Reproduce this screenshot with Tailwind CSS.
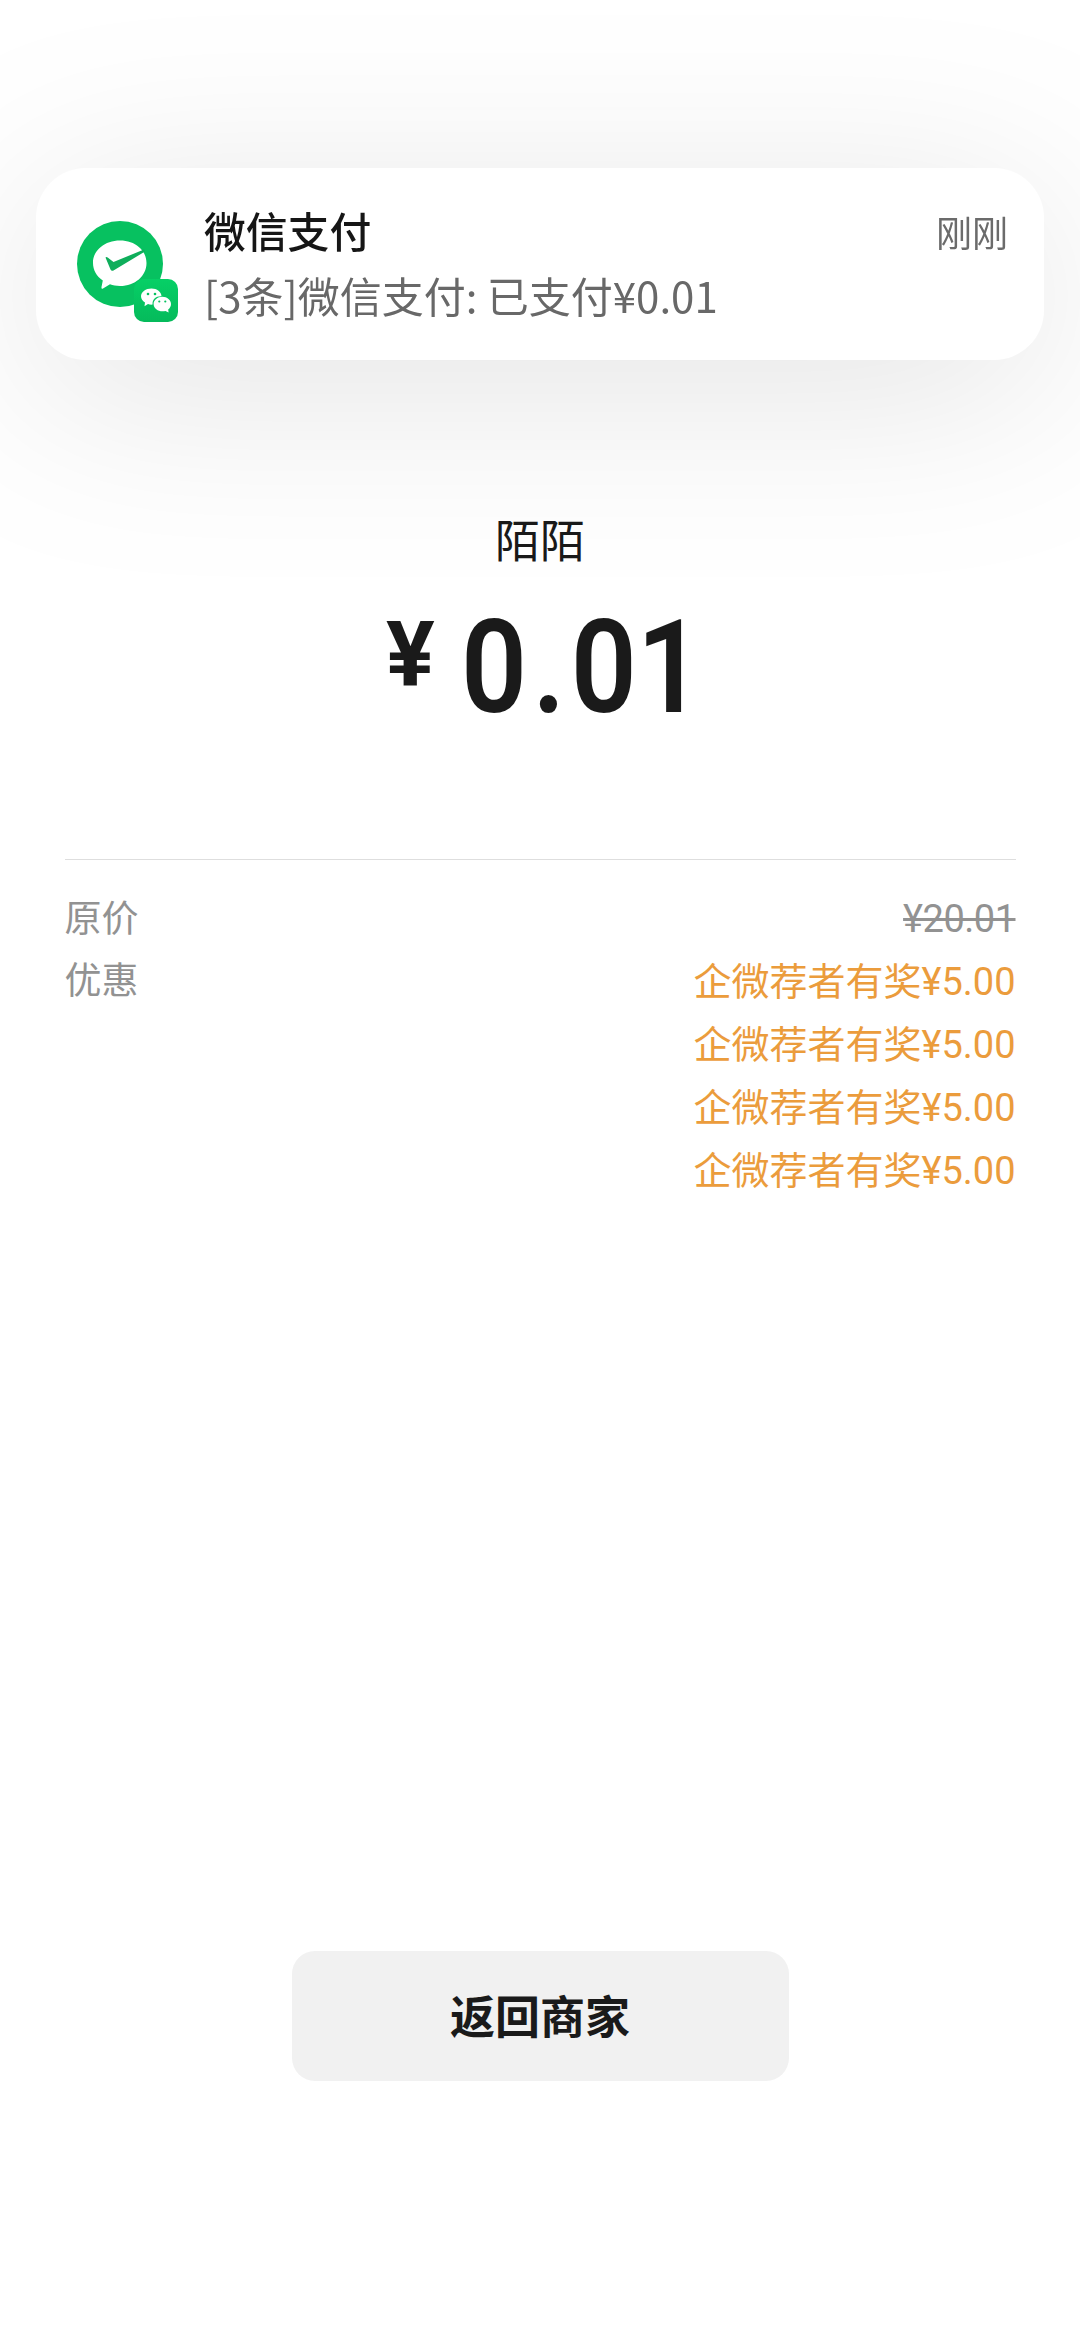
<!DOCTYPE html>
<html lang="zh-CN">
<head>
  <meta charset="UTF-8" />
  <meta name="viewport" content="width=device-width, initial-scale=1.0" />
  <title>微信支付</title>
  <script src="https://cdn.jsdelivr.net/npm/@tailwindcss/browser@4"></script>
</head>
<body class="bg-white text-[#1a1a1a] font-['Roboto','Noto_Sans_CJK_SC',sans-serif]">
  <div class="w-[1080px] h-[2340px] flex flex-col items-center overflow-hidden pt-[168px]">
    <!-- Notification -->
    <div class="w-[1008px] h-48 shrink-0 flex rounded-[50px] bg-white drop-shadow-[0_32px_96px_rgba(0,0,0,0.11)] pl-[41px] pr-9 pt-[35px]">
      <svg class="w-[102px] h-[102px] shrink-0 mt-[18px]" viewBox="0 0 102 102">
        <defs>
          <linearGradient id="badge" x1="0" y1="0" x2="0" y2="1">
            <stop offset="0" stop-color="#06d066" />
            <stop offset="1" stop-color="#05ba5b" />
          </linearGradient>
        </defs>
        <circle cx="43" cy="43" r="43" fill="#07c160" />
        <path d="M43 19.500C58 19.500 69.500 29 69.500 42S58 65 43 65C39 65 36 64.400 33 63.300L26 67.500Q24 68.500 24.500 66L25.800 59.500C19.500 55.300 16 49 16 42C16 29 28 19.500 43 19.500Z" fill="#fff" />
        <path d="M28.500 36.500Q29.500 35.500 31 36.800L36.500 41L67 28.500L68 30.500L36.500 49.500Q34.500 50.500 33.500 48.500Z" fill="#0fae5b" />
        <rect x="57" y="58" width="44" height="43" rx="10" fill="url(#badge)" />
        <path d="M74.500 67.500C80 67.500 84.500 71 84.500 75.300C79 75 75 78.500 75.600 83.600C74 83.800 72.300 83.500 71 83L67.500 85.200L68 81.600C65.500 80 64 77.800 64 75.300C64 71 68.800 67.500 74.500 67.500Z" fill="#fff" />
        <path d="M85.300 75.700C90.200 75.700 94 79 94 83C94 85.300 92.900 87.200 91.200 88.500L91.600 91.500L88.500 89.900C83 91.600 76.600 88.300 76.600 83C76.600 79 80.500 75.700 85.300 75.700Z" fill="#fff" />
        <g fill="#07c160">
          <circle cx="71" cy="73" r="1.300" />
          <circle cx="78" cy="73" r="1.300" />
          <circle cx="82.300" cy="80.500" r="1.100" />
          <circle cx="88.300" cy="80.500" r="1.100" />
        </g>
      </svg>
      <div class="flex-1 ml-[25px]">
        <div class="flex justify-between">
          <h1 class="text-[41.800px] leading-[62px] font-medium text-[#161616]">微信支付</h1>
          <span class="text-[36px] leading-[64px] text-[#6b6b6b]">刚刚</span>
        </div>
        <p class="text-[42px] leading-[56px] text-[#686868] font-['Noto_Sans_CJK_SC',sans-serif]">[3条]微信支付: 已支付¥0.01</p>
      </div>
    </div>

    <!-- Amount -->
    <div class="text-[45px] leading-[60px] mt-[153px]">陌陌</div>
    <div class="w-[308px] h-[150px] mt-[19px] flex items-start">
      <span class="w-[50px] text-[91px] leading-[126px] font-bold">¥</span>
      <span class="ml-[26px] text-[130px] leading-[151px] font-semibold whitespace-nowrap origin-left scale-x-[0.89]"><span class="tracking-[6px]">0.</span>01</span>
    </div>

    <!-- Price details -->
    <div class="w-[951px] mt-[117px] border-t border-[#dedede] pt-[28px] text-[38px]">
      <div class="flex justify-between h-[63px] leading-[63px] text-[#929292]">
        <span class="text-[37px]">原价</span>
        <span class="line-through tracking-[-0.500px]">¥20.01</span>
      </div>
      <div class="flex justify-between leading-[63px]">
        <span class="text-[37px] leading-[61px] text-[#929292]">优惠</span>
        <ul class="text-right text-[#eb9c3c]">
          <li>企微荐者有奖¥5.00</li>
          <li>企微荐者有奖¥5.00</li>
          <li>企微荐者有奖¥5.00</li>
          <li>企微荐者有奖¥5.00</li>
        </ul>
      </div>
    </div>

    <button class="w-[497px] h-[130px] mt-[748px] pt-1.5 rounded-[23px] bg-[#f1f1f1] text-[45px] font-bold">返回商家</button>
  </div>
</body>
</html>
